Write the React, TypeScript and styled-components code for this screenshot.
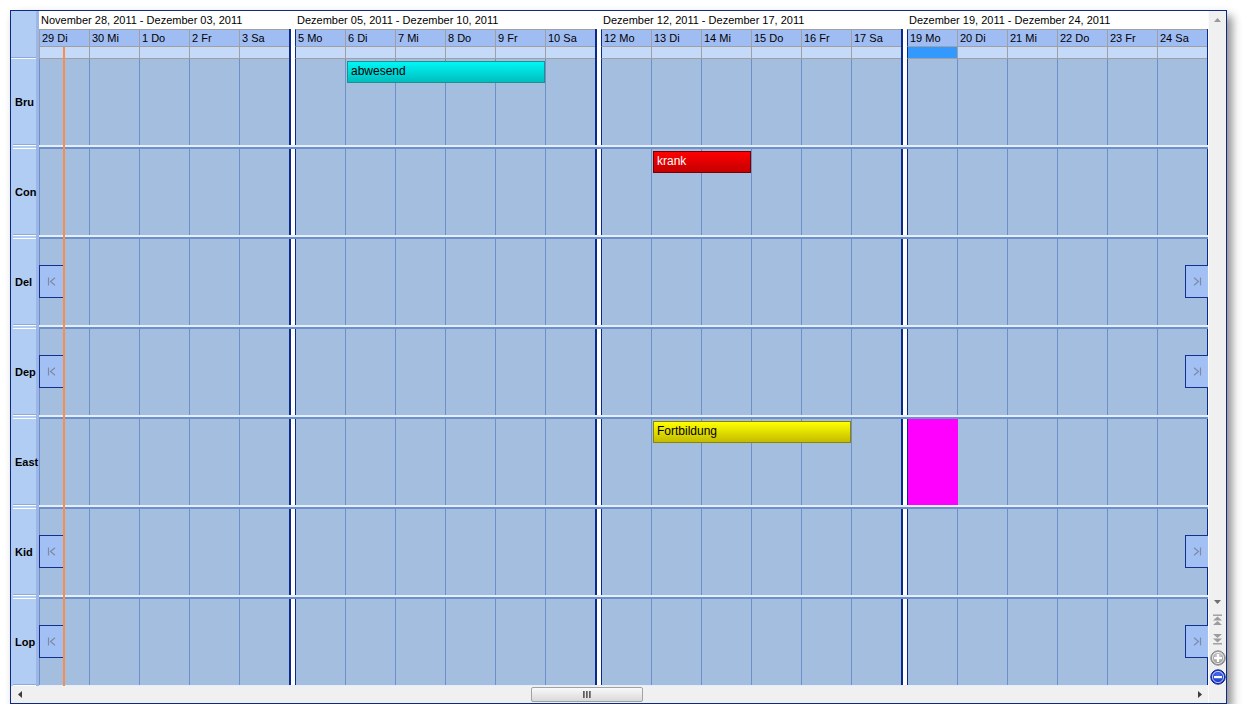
import React from 'react'
import styled, { createGlobalStyle, css } from 'styled-components'

const GlobalStyle = createGlobalStyle`
	html, body {
		margin: 0;
		padding: 0;
		background: #ffffff;
	}
	body {
		font-family: 'Liberation Sans', Arial, sans-serif;
		font-size: 11px;
		color: #000000;
	}
`

type Week = { title: string; days: string[] }

const weeks: Week[] = [
	{ title: 'November 28, 2011 - Dezember 03, 2011', days: ['29 Di', '30 Mi', '1 Do', '2 Fr', '3 Sa'] },
	{ title: 'Dezember 05, 2011 - Dezember 10, 2011', days: ['5 Mo', '6 Di', '7 Mi', '8 Do', '9 Fr', '10 Sa'] },
	{ title: 'Dezember 12, 2011 - Dezember 17, 2011', days: ['12 Mo', '13 Di', '14 Mi', '15 Do', '16 Fr', '17 Sa'] },
	{ title: 'Dezember 19, 2011 - Dezember 24, 2011', days: ['19 Mo', '20 Di', '21 Mi', '22 Do', '23 Fr', '24 Sa'] },
]

const resources = ['Bru', 'Con', 'Del', 'Dep', 'East', 'Kid', 'Lop']
const withNav = ['Del', 'Dep', 'Kid', 'Lop']

type Kind = 'cyan' | 'red' | 'yellow' | 'block'
type Appointment = { res: string; week: number; day: number; len: number; label?: string; kind: Kind }

const appointments: Appointment[] = [
	{ res: 'Bru', week: 1, day: 1, len: 4, label: 'abwesend', kind: 'cyan' },
	{ res: 'Con', week: 2, day: 1, len: 2, label: 'krank', kind: 'red' },
	{ res: 'East', week: 2, day: 1, len: 4, label: 'Fortbildung', kind: 'yellow' },
	{ res: 'East', week: 3, day: 0, len: 1, kind: 'block' },
]

const DAY = 50
const DARK = '#0c2a8c'
const GRID = '#6d8fca'

export default function App() {
	return (
		<>
			<GlobalStyle />
			<Frame>
				<Main>
					<Timeline>
						<HeaderRow>
							<Corner />
							{weeks.map((w, wi) => (
								<React.Fragment key={w.title}>
									{wi > 0 && <WeekSep $offset={18} />}
									<WeekHead style={{ width: w.days.length * DAY }}>
										<WeekTitle>{w.title}</WeekTitle>
										<DayRow>
											{w.days.map((d, di) => (
												<DayHead key={d} $edge={wi > 0 && di === 0}>
													{d}
												</DayHead>
											))}
										</DayRow>
										<DayRow>
											{w.days.map((d, di) => (
												<SubHead key={d} $edge={wi > 0 && di === 0} $selected={wi === 3 && di === 0} />
											))}
										</DayRow>
									</WeekHead>
								</React.Fragment>
							))}
							<EndLine $offset={18} />
						</HeaderRow>

						{resources.map((r) => (
							<Row key={r}>
								<LabelCell>
									<LabelBox>{r}</LabelBox>
									<LabelGap />
								</LabelCell>
								<RowGrid>
									<RowCells>
										{weeks.map((w, wi) => (
											<React.Fragment key={w.title}>
												{wi > 0 && <WeekSep $offset={0} />}
												<WeekBody>
													{w.days.map((d, di) => (
														<DayCell key={d} $edge={wi > 0 && di === 0} />
													))}
													{appointments
														.filter((a) => a.res === r && a.week === wi)
														.map((a) =>
															a.kind === 'block' ? (
																<Block key={a.week + '-' + a.day} style={{ left: a.day * DAY + 1, width: a.len * DAY }} />
															) : (
																<EventBar
																	key={a.week + '-' + a.day}
																	$kind={a.kind}
																	style={{ left: a.day * DAY + 2, width: a.len * DAY - 2 }}
																>
																	{a.label}
																</EventBar>
															),
														)}
												</WeekBody>
											</React.Fragment>
										))}
										<EndLine $offset={0} />
										{withNav.includes(r) && (
											<>
												<NavButton $side="left">
													<NavIcon dir="left" />
												</NavButton>
												<NavButton $side="right">
													<NavIcon dir="right" />
												</NavButton>
											</>
										)}
									</RowCells>
									<RowSep />
								</RowGrid>
							</Row>
						))}
						<TodayLine />
					</Timeline>
					<HScroll>
						<ArrowBox>
							<Triangle dir="left" color="#3c3c3c" />
						</ArrowBox>
						<HTrack>
							<Thumb>
								<Grip>
									<i />
									<i />
									<i />
								</Grip>
							</Thumb>
						</HTrack>
						<ArrowBox>
							<Triangle dir="right" color="#3c3c3c" />
						</ArrowBox>
					</HScroll>
				</Main>
				<VScroll>
					<VArrow $h={18}>
						<Triangle dir="up" color="#9a9a9a" />
					</VArrow>
					<VTrack />
					<VArrow $h={17}>
						<Triangle dir="down" color="#6e6e6e" />
					</VArrow>
					<ToolButton>
						<JumpIcon dir="up" />
					</ToolButton>
					<ToolButton>
						<JumpIcon dir="down" />
					</ToolButton>
					<ToolButton>
						<ZoomIcon plus />
					</ToolButton>
					<ToolButton>
						<ZoomIcon />
					</ToolButton>
					<ScrollCorner />
				</VScroll>
			</Frame>
		</>
	)
}

const Triangle = ({ dir, color }: { dir: 'up' | 'down' | 'left' | 'right'; color: string }) => {
	const pts = {
		up: '0,4 3.5,0 7,4',
		down: '0,0 3.5,4 7,0',
		left: '4,0 0,3.5 4,7',
		right: '0,0 4,3.5 0,7',
	}[dir]
	const horizontal = dir === 'left' || dir === 'right'
	return (
		<svg width={horizontal ? 4 : 7} height={horizontal ? 7 : 4} viewBox={horizontal ? '0 0 4 7' : '0 0 7 4'}>
			<polygon points={pts} fill={color} />
		</svg>
	)
}

const NavIcon = ({ dir }: { dir: 'left' | 'right' }) => (
	<svg width="10" height="9" viewBox="0 0 10 9">
		{dir === 'left' ? (
			<g fill="none" stroke="#7d8aa6" strokeWidth="1.2">
				<line x1="1.5" y1="0.5" x2="1.5" y2="8.5" />
				<polyline points="8,0.8 3.5,4.5 8,8.2" />
			</g>
		) : (
			<g fill="none" stroke="#7d8aa6" strokeWidth="1.2">
				<polyline points="2,0.8 6.5,4.5 2,8.2" />
				<line x1="8.5" y1="0.5" x2="8.5" y2="8.5" />
			</g>
		)}
	</svg>
)

const JumpIcon = ({ dir }: { dir: 'up' | 'down' }) => (
	<svg width="11" height="12" viewBox="0 0 11 12">
		{dir === 'up' ? (
			<g fill="#9c9c9c">
				<rect x="1" y="0.5" width="9" height="1.4" />
				<polygon points="1,6.5 5.5,2.5 10,6.5" />
				<polygon points="1,11 5.5,7 10,11" />
			</g>
		) : (
			<g fill="#9c9c9c">
				<polygon points="1,1 5.5,5 10,1" />
				<polygon points="1,5.5 5.5,9.5 10,5.5" />
				<rect x="1" y="10.1" width="9" height="1.4" />
			</g>
		)}
	</svg>
)

const ZoomIcon = ({ plus }: { plus?: boolean }) => (
	<svg width="16" height="16" viewBox="0 0 16 16">
		<defs>
			<radialGradient id={plus ? 'zp' : 'zm'} cx="50%" cy="35%" r="60%">
				<stop offset="0%" stopColor={plus ? '#d4d4d4' : '#4a6cf0'} />
				<stop offset="100%" stopColor={plus ? '#8e8e8e' : '#1030c0'} />
			</radialGradient>
		</defs>
		<circle cx="8" cy="8" r="7.2" fill={`url(#${plus ? 'zp' : 'zm'})`} stroke={plus ? '#8a8a8a' : '#0a1f8a'} strokeWidth="1" />
		<circle cx="8" cy="8" r="5.6" fill="none" stroke="#ffffff" strokeOpacity="0.8" strokeWidth="0.9" />
		<rect x="4" y="7" width="8" height="2.2" fill="#ffffff" />
		{plus && <rect x="6.9" y="4" width="2.2" height="8" fill="#ffffff" />}
	</svg>
)

const Frame = styled.div`
	margin: 10px 0 0 10px;
	width: 1215px;
	height: 692px;
	border: 1px solid ${DARK};
	display: flex;
	background: #f0f0f0;
	box-shadow: 5px 6px 9px rgba(0, 0, 0, 0.45);
`

const Main = styled.div`
	width: 1197px;
	display: flex;
	flex-direction: column;
`

const Timeline = styled.div`
	position: relative;
	height: 675px;
	overflow: hidden;
	background: #a4bee0;
`

const HeaderRow = styled.div`
	display: flex;
	height: 48px;
	background: #ffffff;
`

const Corner = styled.div`
	width: 25px;
	border-right: 3px solid #9cb7e6;
	background: #b2cdf4;
	box-shadow: inset 0 -1px 0 #f2f7ff, inset 0 -2px 0 #8eaadb;
`

const WeekHead = styled.div`
	display: flex;
	flex-direction: column;
`

const WeekTitle = styled.div`
	height: 18px;
	line-height: 18px;
	padding-left: 2px;
	white-space: nowrap;
	overflow: hidden;
`

const DayRow = styled.div`
	display: flex;
`

const edgeBorder = css<{ $edge: boolean }>`
	border-left: 1px solid ${(p) => (p.$edge ? DARK : '#a0a0a0')};
`

const DayHead = styled.div<{ $edge: boolean }>`
	box-sizing: border-box;
	width: ${DAY}px;
	height: 17px;
	line-height: 16px;
	padding-left: 2px;
	border-top: 1px solid #a0a0a0;
	${edgeBorder}
	background: #a0bdf3;
	white-space: nowrap;
`

const SubHead = styled.div<{ $edge: boolean; $selected: boolean }>`
	box-sizing: border-box;
	width: ${DAY}px;
	height: 13px;
	border-top: 1px solid #a0a0a0;
	border-bottom: 1px solid #a0a0a0;
	${edgeBorder}
	background: ${(p) => (p.$selected ? '#3399ff' : '#c5daf9')};
`

const WeekSep = styled.div<{ $offset: number }>`
	box-sizing: border-box;
	width: 6px;
	margin-top: ${(p) => p.$offset}px;
	border-left: 2px solid ${DARK};
	background: #ffffff;
`

const EndLine = styled.div<{ $offset: number }>`
	width: 1px;
	margin-top: ${(p) => p.$offset}px;
	background: ${DARK};
`

const Row = styled.div`
	display: flex;
	height: 90px;
`

const LabelCell = styled.div`
	width: 28px;
	display: flex;
	flex-direction: column;
	background: #b2cdf4;
	border-right: 3px solid #9cb7e6;
	box-sizing: border-box;
`

const LabelBox = styled.div`
	height: 85px;
	margin-left: 2px;
	border-bottom: 1px solid #8eaadb;
	display: flex;
	align-items: center;
	padding-left: 2px;
	font-weight: bold;
`

const LabelGap = styled.div`
	height: 2px;
	margin-left: 2px;
	border-top: 1px solid #ffffff;
	border-bottom: 1px solid #ffffff;
`

const RowGrid = styled.div`
	flex: 1;
	display: flex;
	flex-direction: column;
`

const RowCells = styled.div`
	position: relative;
	height: 86px;
	display: flex;
`

const RowSep = styled.div`
	height: 0;
	border-top: 2px solid #e4eefc;
	border-bottom: 2px solid ${GRID};
`

const WeekBody = styled.div`
	position: relative;
	display: flex;
`

const DayCell = styled.div<{ $edge: boolean }>`
	box-sizing: border-box;
	width: ${DAY}px;
	border-left: 1px solid ${(p) => (p.$edge ? DARK : GRID)};
	background: #a4bee0;
`

const kinds = {
	cyan: { from: '#00f6f6', to: '#00bebe', border: '#1f9090', color: '#000000' },
	red: { from: '#ff0000', to: '#c40000', border: '#7a0000', color: '#ffffff' },
	yellow: { from: '#ffff00', to: '#c4bc00', border: '#8c8400', color: '#000000' },
}

const EventBar = styled.div<{ $kind: Exclude<Kind, 'block'> }>`
	position: absolute;
	top: 2px;
	height: 22px;
	box-sizing: border-box;
	border: 1px solid ${(p) => kinds[p.$kind].border};
	background: linear-gradient(${(p) => kinds[p.$kind].from}, ${(p) => kinds[p.$kind].to});
	color: ${(p) => kinds[p.$kind].color};
	font-size: 12px;
	line-height: 19px;
	padding-left: 3px;
	white-space: nowrap;
	overflow: hidden;
`

const Block = styled.div`
	position: absolute;
	top: 0;
	bottom: 0;
	background: #ff00ff;
`

const NavButton = styled.div<{ $side: 'left' | 'right' }>`
	position: absolute;
	top: 26px;
	height: 33px;
	box-sizing: border-box;
	width: ${(p) => (p.$side === 'left' ? 25 : 23)}px;
	${(p) => (p.$side === 'left' ? 'left: 0;' : 'right: 0;')}
	border: 1px solid #13308f;
	${(p) => (p.$side === 'right' ? 'border-right: none;' : '')}
	background: #a3c0f4;
	display: flex;
	align-items: center;
	justify-content: center;
`

const TodayLine = styled.div`
	position: absolute;
	left: 52px;
	top: 36px;
	bottom: 0;
	width: 2px;
	background: #fb8d48;
`

const HScroll = styled.div`
	height: 17px;
	display: flex;
	background: #f0f0f0;
`

const ArrowBox = styled.div`
	width: 17px;
	display: flex;
	align-items: center;
	justify-content: center;
`

const HTrack = styled.div`
	flex: 1;
	display: flex;
	align-items: center;
`

const Thumb = styled.div`
	margin-left: 503px;
	width: 112px;
	height: 15px;
	box-sizing: border-box;
	border: 1px solid #a2a2a2;
	border-radius: 2px;
	background: linear-gradient(#f9f9f9, #e9e9e9 50%, #d9d9d9);
	display: flex;
	align-items: center;
	justify-content: center;
`

const Grip = styled.div`
	display: flex;
	gap: 1px;
	i {
		display: block;
		width: 2px;
		height: 7px;
		background: linear-gradient(90deg, #4a4a4a, #9a9a9a);
	}
`

const VScroll = styled.div`
	width: 18px;
	display: flex;
	flex-direction: column;
	background: #f0f0f0;
	box-sizing: border-box;
	border-left: 1px solid #fbfbfb;
`

const VArrow = styled.div<{ $h: number }>`
	height: ${(p) => p.$h}px;
	display: flex;
	align-items: center;
	justify-content: center;
`

const VTrack = styled.div`
	flex: 1;
`

const ToolButton = styled.div`
	height: 19px;
	display: flex;
	align-items: center;
	justify-content: center;
`

const ScrollCorner = styled.div`
	height: 17px;
`
